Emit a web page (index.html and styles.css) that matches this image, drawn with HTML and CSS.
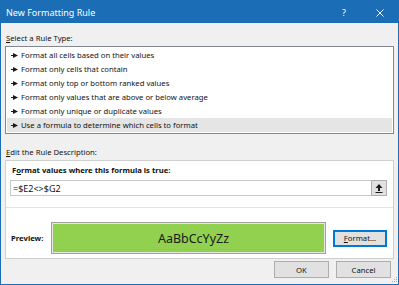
FILE: index.html
```html
<html>
  <head>
    <title>New Formatting Rule</title>
    <link rel="stylesheet" href="styles.css">
  </head>
  <body>
    <div class="dialog">
      <div class="titlebar">
        <span class="title">New Formatting Rule</span>
        <span class="help">?</span>
        <span class="close"><svg width="8" height="8" viewBox="0 0 8 8"><path d="M0.5 0.5 L7.5 7.5 M7.5 0.5 L0.5 7.5" stroke="#ffffff" stroke-width="1" fill="none"/></svg></span>
      </div>

      <div class="main">
        <div class="label label-top"><u>S</u>elect a Rule Type:</div>
        <ul class="rules">
          <li><svg class="arrow" width="7" height="5" viewBox="0 0 7 5"><path d="M0 2.5 H3" stroke="#1a1a1a" stroke-width="1"/><path d="M2 0 L7 2.5 L2 5 Z" fill="#1a1a1a"/></svg>Format all cells based on their values</li>
          <li><svg class="arrow" width="7" height="5" viewBox="0 0 7 5"><path d="M0 2.5 H3" stroke="#1a1a1a" stroke-width="1"/><path d="M2 0 L7 2.5 L2 5 Z" fill="#1a1a1a"/></svg>Format only cells that contain</li>
          <li><svg class="arrow" width="7" height="5" viewBox="0 0 7 5"><path d="M0 2.5 H3" stroke="#1a1a1a" stroke-width="1"/><path d="M2 0 L7 2.5 L2 5 Z" fill="#1a1a1a"/></svg>Format only top or bottom ranked values</li>
          <li><svg class="arrow" width="7" height="5" viewBox="0 0 7 5"><path d="M0 2.5 H3" stroke="#1a1a1a" stroke-width="1"/><path d="M2 0 L7 2.5 L2 5 Z" fill="#1a1a1a"/></svg>Format only values that are above or below average</li>
          <li><svg class="arrow" width="7" height="5" viewBox="0 0 7 5"><path d="M0 2.5 H3" stroke="#1a1a1a" stroke-width="1"/><path d="M2 0 L7 2.5 L2 5 Z" fill="#1a1a1a"/></svg>Format only unique or duplicate values</li>
          <li class="selected"><svg class="arrow" width="7" height="5" viewBox="0 0 7 5"><path d="M0 2.5 H3" stroke="#1a1a1a" stroke-width="1"/><path d="M2 0 L7 2.5 L2 5 Z" fill="#1a1a1a"/></svg>Use a formula to determine which cells to format</li>
        </ul>

        <div class="label label-edit"><u>E</u>dit the Rule Description:</div>
        <div class="group">
          <div class="formula-area">
            <div class="bold-label">F<u>o</u>rmat values where this formula is true:</div>
            <div class="input">
              <span class="input-text">=$E2&lt;&gt;$G2</span>
              <span class="ref-btn"><svg width="8" height="9" viewBox="0 0 8 9"><path d="M4 0 L7.5 4 H5 V7 H3 V4 H0.5 Z" fill="#1a1a1a"/><path d="M0.5 8.5 H7.5" stroke="#1a1a1a" stroke-width="1"/></svg></span>
            </div>
          </div>
          <div class="preview-row">
            <div class="bold-label preview-label">Preview:</div>
            <div class="preview">AaBbCcYyZz</div>
            <span class="btn btn-focus"><u>F</u>ormat...</span>
          </div>
        </div>

        <div class="footer">
          <span class="btn btn-ok">OK</span>
          <span class="btn btn-cancel">Cancel</span>
          <svg class="grip" width="6" height="6" viewBox="0 0 6 6">
            <rect x="4" y="0" width="1" height="1" fill="#b0b0b0"/>
            <rect x="2" y="2" width="1" height="1" fill="#b0b0b0"/>
            <rect x="4" y="2" width="1" height="1" fill="#b0b0b0"/>
            <rect x="0" y="4" width="1" height="1" fill="#b0b0b0"/>
            <rect x="2" y="4" width="1" height="1" fill="#b0b0b0"/>
            <rect x="4" y="4" width="1" height="1" fill="#b0b0b0"/>
          </svg>
        </div>
      </div>
    </div>
  </body>
</html>
```

FILE: styles.css
```css
body {
  margin: 0px;
  padding: 0px;
}

.dialog {
  width: 399px;
  height: 285px;
  box-sizing: border-box;
  display: flex;
  flex-direction: column;
  font-family: "Noto Sans", sans-serif;
  font-size: 7.7px;
  color: #111111;
  background-color: #f0f0f0;
}

.titlebar {
  height: 23px;
  flex: none;
  display: flex;
  align-items: center;
  background-color: #1b6db6;
  color: #ffffff;
  font-size: 9px;
}
.title { flex: 1; padding-left: 6px; padding-top: 2px; }
.help { width: 28px; text-align: center; padding-top: 2px; }
.close { width: 36px; margin-left: 4px; margin-right: 1px; display: flex; justify-content: center; padding-top: 2px; }

.main {
  flex: 1;
  display: flex;
  flex-direction: column;
  padding: 0px 4px;
  border: 1px solid #1b6db6;
  border-top: 0px;
}

.label { height: 14px; line-height: 14px; padding-left: 1px; }
.label-top { margin-top: 8px; }
.label-edit { margin-top: 11px; }

.rules {
  list-style: none;
  margin: 1px 0px 0px 0px;
  padding: 1px;
  height: 88px;
  box-sizing: border-box;
  background-color: #ffffff;
  border: 1px solid #828790;
}
.rules li {
  height: 14px;
  line-height: 14px;
  display: flex;
  align-items: center;
  padding-left: 4px;
  white-space: nowrap;
}
.rules li.selected { background-color: #e5e5e5; }
.arrow { margin-right: 3px; flex: none; }

.group {
  margin-top: 1px;
  height: 99px;
  box-sizing: border-box;
  background-color: #ffffff;
  border: 1px solid #cfcfcf;
  display: flex;
  flex-direction: column;
}

.bold-label { font-weight: bold; height: 14px; line-height: 14px; }

.formula-area {
  padding: 2px 6px 11px 4px;
  border-bottom: 1px solid #e3e3e3;
}
.formula-area .bold-label { padding-left: 2px; }

.input {
  margin-top: 3px;
  height: 16px;
  box-sizing: border-box;
  border: 1px solid #c8c8c8;
  display: flex;
  align-items: center;
}
.input-text { flex: 1; padding-left: 2px; font-size: 9px; }
.ref-btn {
  width: 16px;
  height: 16px;
  box-sizing: border-box;
  margin-right: -1px;
  background-color: #e1e1e1;
  border: 1px solid #adadad;
  display: flex;
  align-items: center;
  justify-content: center;
}

.preview-row {
  flex: 1;
  display: flex;
  align-items: center;
  padding: 10px 6px 0px 5px;
}
.preview-label { width: 40px; flex: none; }
.preview {
  flex: 1;
  height: 32px;
  box-sizing: border-box;
  background-color: #92d050;
  border: 1px solid #a0a0a0;
  box-shadow: inset 0 0 0 1px #e6e6e6;
  display: flex;
  align-items: center;
  justify-content: center;
  padding-left: 10px;
  font-size: 12.5px;
  color: #1a1a1a;
}

.btn {
  height: 17px;
  box-sizing: border-box;
  background-color: #e1e1e1;
  border: 1px solid #adadad;
  display: flex;
  align-items: center;
  justify-content: center;
}
.btn-focus {
  width: 54px;
  height: 17px;
  margin-left: 7px;
  border: 1px solid #0078d7;
  box-shadow: inset 0 0 0 1px #0078d7;
}

.footer {
  flex: 1;
  display: flex;
  justify-content: flex-end;
  align-items: flex-start;
  padding-top: 2px;
  margin-right: -4px;
}
.btn-ok { width: 55px; }
.btn-cancel { width: 55px; margin-left: 7px; }
.grip { align-self: flex-end; margin-left: 1px; margin-bottom: 1px; }
```
